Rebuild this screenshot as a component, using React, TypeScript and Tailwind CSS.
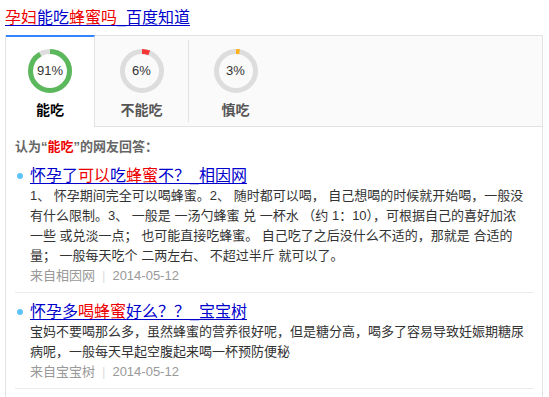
const FONT = "font-['Liberation_Sans','Noto_Sans_CJK_SC',sans-serif]";

type Tab = { label: string; pct: number; color: string };

const tabs: Tab[] = [
  { label: '能吃', pct: 91, color: '#5cb85c' },
  { label: '不能吃', pct: 6, color: '#f43838' },
  { label: '慎吃', pct: 3, color: '#ffb21e' },
];

function Ring({ pct, color }: { pct: number; color: string }) {
  const r = 19.5;
  const c = 2 * Math.PI * r;
  return (
    <div className="relative w-[44px] h-[44px]">
      <svg width="44" height="44" viewBox="0 0 44 44" className="-rotate-90">
        <circle cx="22" cy="22" r={r} fill="none" stroke="#dddddd" strokeWidth="5" />
        <circle
          cx="22"
          cy="22"
          r={r}
          fill="none"
          stroke={color}
          strokeWidth="5"
          strokeDasharray={`${(pct / 100) * c} ${c}`}
        />
      </svg>
      <span className="absolute inset-0 flex items-center justify-center text-[13px] text-[#333]">
        {pct}%
      </span>
    </div>
  );
}

function TabItem({ tab, active }: { tab: Tab; active?: boolean }) {
  return (
    <div
      className={
        active
          ? 'w-[88px] flex flex-col items-center pt-[12px] pb-[6px]'
          : 'w-[93px] flex flex-col items-center pt-[13px] pb-[6px]'
      }
    >
      <Ring pct={tab.pct} color={tab.color} />
      <div
        className={
          active
            ? 'mt-[7px] text-[14px] leading-[20px] font-bold text-black'
            : 'mt-[7px] text-[14px] leading-[20px] font-bold text-[#555]'
        }
      >
        {tab.label}
      </div>
    </div>
  );
}

type Part = { t: string; red?: boolean };

const answers: { title: Part[]; body: string; site: string; date: string }[] = [
  {
    title: [
      { t: '怀孕了' },
      { t: '可以', red: true },
      { t: '吃' },
      { t: '蜂蜜', red: true },
      { t: '不？_相因网' },
    ],
    body:
      '1、 怀孕期间完全可以喝蜂蜜。2、 随时都可以喝， 自己想喝的时候就开始喝，一般没有什么限制。3、 一般是 一汤勺蜂蜜 兑 一杯水 （约 1：10），可根据自己的喜好加浓一些 或兑淡一点； 也可能直接吃蜂蜜。 自己吃了之后没什么不适的，那就是 合适的量； 一般每天吃个 二两左右、 不超过半斤 就可以了。',
    site: '来自相因网',
    date: '2014-05-12',
  },
  {
    title: [{ t: '怀孕多' }, { t: '喝蜂蜜', red: true }, { t: '好么？？_宝宝树' }],
    body: '宝妈不要喝那么多，虽然蜂蜜的营养很好呢，但是糖分高，喝多了容易导致妊娠期糖尿病呢，一般每天早起空腹起来喝一杯预防便秘',
    site: '来自宝宝树',
    date: '2014-05-12',
  },
];

export default function App() {
  return (
    <div className={`${FONT} bg-white w-[549px] h-[397px] overflow-hidden pl-[5px] pt-[6px]`}>
      {/* page title */}
      <a className="block w-fit text-[16px] leading-[24px] text-[#0000cc] underline underline-offset-[2px]">
        <span className="text-[#e00]">孕妇</span>
        能吃
        <span className="text-[#e00]">蜂蜜吗</span>
        _百度知道
      </a>

      <div className="mt-[5px] w-[538px] border-x border-[#e3e3e3] min-h-[400px]">
        {/* tabs */}
        <div className="flex">
          <div className="border-t-2 border-[#3385ff] border-r border-r-[#e3e3e3] bg-white">
            <TabItem tab={tabs[0]} active />
          </div>
          <div className="flex-1 flex bg-[#fafafa] border-y border-[#e3e3e3]">
            <TabItem tab={tabs[1]} />
            <div className="w-px bg-[#e3e3e3] my-[4px]" />
            <TabItem tab={tabs[2]} />
          </div>
        </div>

        {/* answers */}
        <div className="pl-[9px] pr-[8px] pt-[10px]">
          <div className="text-[13px] leading-[20px] font-bold text-[#666]">
            认为“<span className="text-[#e00]">能吃</span>”的网友回答：
          </div>
          {answers.map((a, idx) => (
            <div key={idx} className="pt-[9px] pb-[6px] border-b border-[#ebebeb]">
              <div className="flex items-center">
                <span className="w-[6px] h-[6px] rounded-full bg-[#5ec3f6] ml-[2px] mr-[7px]" />
                <a className="text-[16px] leading-[20px] text-[#0000cc] underline underline-offset-[2px]">
                  {a.title.map((p, i) => (
                    <span key={i} className={p.red ? 'text-[#e00]' : ''}>
                      {p.t}
                    </span>
                  ))}
                </a>
              </div>
              <div className="pl-[15px] pr-[5px]">
                <p className="text-[13px] leading-[20px] text-[#333]">{a.body}</p>
                <div className="text-[13px] leading-[20px] text-[#999]">
                  {a.site}
                  <span className="text-[#ddd] mx-[7px]">|</span>
                  {a.date}
                </div>
              </div>
            </div>
          ))}
        </div>
      </div>
    </div>
  );
}
